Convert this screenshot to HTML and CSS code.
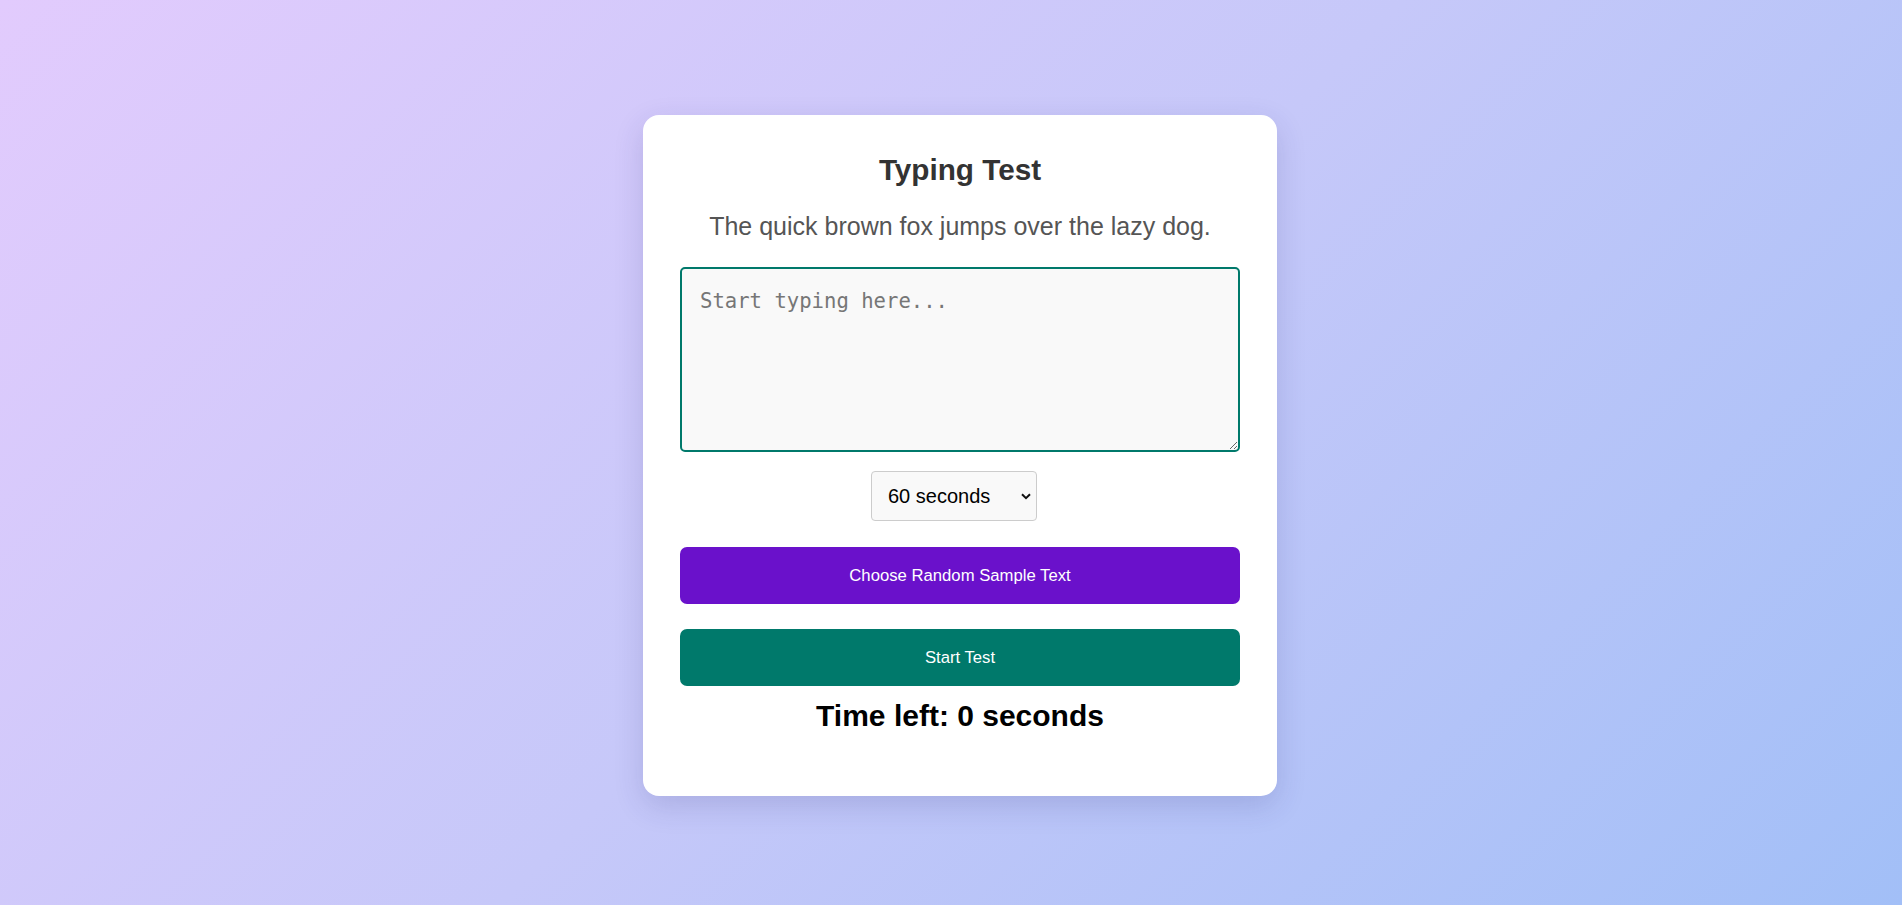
FILE: index.html
```html
<!DOCTYPE html>
<html lang="en">
<head>
<meta charset="utf-8">
<title>Typing Test</title>
<link rel="stylesheet" href="styles.css">
</head>
<body>
<main class="card">
  <h2 class="title">Typing Test</h2>
  <p class="sample">The quick brown fox jumps over the lazy dog.</p>
  <textarea class="input" placeholder="Start typing here..."></textarea>
  <div class="select-row">
    <span class="select-wrap">
      <select class="duration">
        <option>30 seconds</option>
        <option selected>60 seconds</option>
        <option>120 seconds</option>
      </select>
      <svg class="chevron" width="10" height="7" viewBox="0 0 10 7" aria-hidden="true">
        <path d="M1 1.2 L5 5.2 L9 1.2" fill="none" stroke="#111" stroke-width="2"/>
      </svg>
    </span>
  </div>
  <button class="btn btn-random" type="button">Choose Random Sample Text</button>
  <button class="btn btn-start" type="button">Start Test</button>
  <div class="timer">Time left: 0 seconds</div>
</main>
</body>
</html>
```

FILE: styles.css
```css
html, body {
  margin: 0;
  height: 100%;
}

body {
  box-sizing: border-box;
  min-height: 100vh;
  padding: 6px 0 0 18px;
  display: flex;
  align-items: center;
  justify-content: center;
  background: linear-gradient(135deg, #e2cbfd 0%, #c6c8f9 50%, #a2bff7 100%);
  font-family: "Liberation Sans", Arial, sans-serif;
}

.card {
  box-sizing: border-box;
  width: 634px;
  padding: 38px 37px 63px;
  background: #fff;
  border-radius: 16px;
  box-shadow: 0 10px 30px rgba(40, 40, 110, 0.16);
  display: flex;
  flex-direction: column;
  align-items: stretch;
  text-align: center;
}

.title {
  margin: 0 0 25px;
  font-size: 29.7px;
  line-height: 34px;
  font-weight: bold;
  color: #333;
}

.sample {
  margin: 0 0 26px;
  font-size: 25px;
  line-height: 29px;
  color: #555;
}

.input {
  display: block;
  box-sizing: border-box;
  width: 100%;
  height: 185px;
  margin: 0;
  padding: 20px 18px;
  border: 2px solid #00796b;
  border-radius: 5px;
  background: #f9f9f9;
  font-family: "DejaVu Sans Mono", "Liberation Mono", monospace;
  font-size: 20.6px;
  color: #222;
  outline: none;
}

.input::placeholder {
  color: #767676;
}

.select-row {
  margin: 19px 0 26px;
  display: flex;
  justify-content: center;
}

.select-wrap {
  position: relative;
  display: inline-block;
  margin-right: 12px;
}

.duration {
  box-sizing: border-box;
  width: 166px;
  height: 50px;
  margin: 0;
  padding: 0 16px;
  border: 1px solid #ccc;
  border-radius: 4px;
  background: #f9f9f9;
  font-family: "Liberation Sans", Arial, sans-serif;
  font-size: 20px;
  color: #000;
  appearance: none;
  -webkit-appearance: none;
  display: block;
}

.chevron {
  position: absolute;
  right: 6px;
  top: 22px;
  pointer-events: none;
}

.btn {
  display: block;
  width: 100%;
  height: 57px;
  margin: 0;
  padding: 0;
  border: none;
  border-radius: 7px;
  color: #fff;
  font-family: "Liberation Sans", Arial, sans-serif;
  font-size: 16.7px;
  cursor: pointer;
}

.btn-random {
  background: #6a11cb;
  margin-bottom: 25px;
}

.btn-start {
  background: #00796b;
}

.timer {
  margin-top: 13px;
  font-size: 30px;
  line-height: 34px;
  font-weight: bold;
  color: #000;
}
```
